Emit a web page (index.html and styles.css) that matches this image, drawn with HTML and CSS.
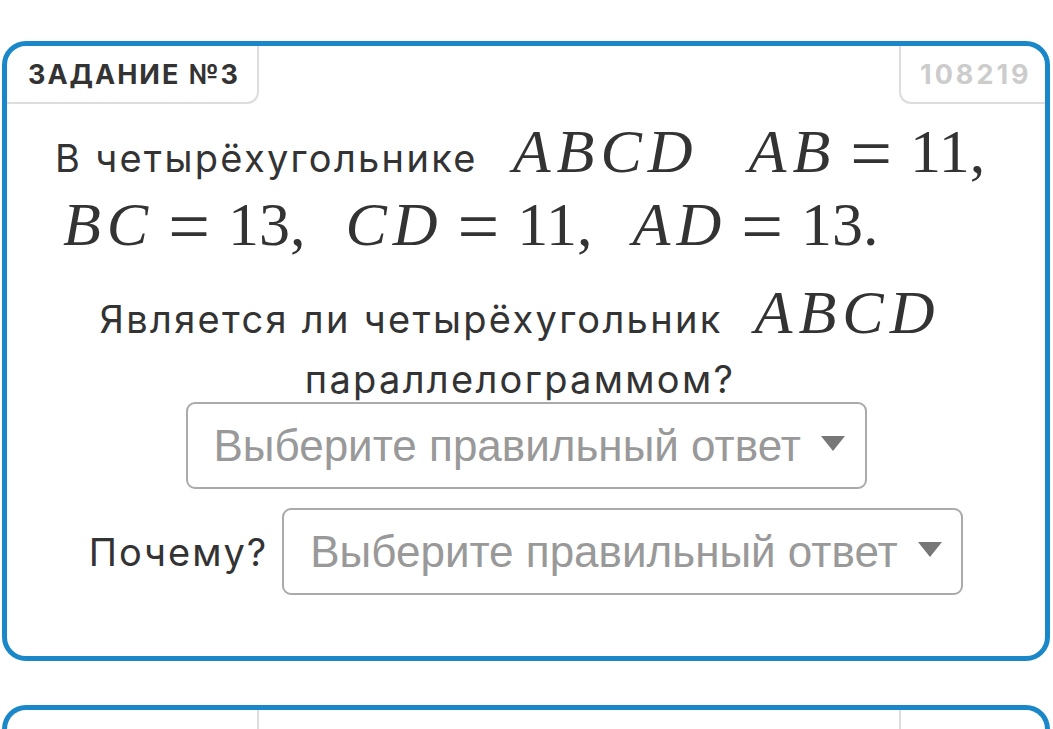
FILE: index.html
```html
<!DOCTYPE html>
<html lang="ru">
<head>
<meta charset="utf-8">
<link rel="stylesheet" href="styles.css">
</head>
<body>
<div class="card">
  <div class="card-head">
    <div class="tab tab-left">ЗАДАНИЕ №3</div>
    <div class="tab tab-right">108219</div>
  </div>
  <div class="card-body">
    <p class="statement">В четырёхугольнике <span class="m m-first"><i>ABCD</i></span><span class="m m-gap"><i>AB</i><span class="eq">=</span>11,</span><br><span class="m m-line"><i>BC</i><span class="eq">=</span>13,</span><span class="m m-sp"><i>CD</i><span class="eq">=</span>11,</span><span class="m m-sp"><i>AD</i><span class="eq">=</span>13.</span></p>
    <p class="question">Является ли четырёхугольник <span class="m m-q"><i>ABCD</i></span><br>параллелограммом?</p>
    <div class="sel-row sel-row-1">
      <div class="select">Выберите правильный ответ<span class="caret"></span></div>
    </div>
    <div class="sel-row sel-row-2">
      <span class="label">Почему?</span>
      <div class="select">Выберите правильный ответ<span class="caret"></span></div>
    </div>
  </div>
</div>
<div class="card card-2">
  <div class="card-head">
    <div class="tab tab-left">&nbsp;</div>
    <div class="tab tab-right">&nbsp;</div>
  </div>
</div>
</body>
</html>
```
FILE: styles.css
```css
html, body {
  margin: 0;
  padding: 0;
  background: #ffffff;
}
body {
  padding-top: 41px;
  padding-left: 2px;
  font-family: Inter, "Liberation Sans", Arial, sans-serif;
  color: #333333;
  overflow: hidden;
  height: 729px;
  box-sizing: border-box;
}
.card {
  width: 1048px;
  height: 620px;
  box-sizing: border-box;
  border: 5px solid #1a87c9;
  border-radius: 24px;
  overflow: hidden;
}
.card-2 {
  margin-top: 44px;
  height: 24px;
  border-bottom: 0;
  border-radius: 24px 24px 0 0;
}
.card-head {
  display: flex;
  justify-content: space-between;
  height: 58px;
}
.tab {
  box-sizing: border-box;
  height: 58px;
  border-bottom: 2px solid #dddddd;
  font-weight: bold;
  font-size: 27px;
  line-height: 58px;
}
.tab-left {
  width: 252px;
  border-right: 2px solid #dddddd;
  border-bottom-right-radius: 12px;
  padding-left: 21px;
  color: #333333;
  letter-spacing: 2px;
}
.tab-right {
  width: 146px;
  border-left: 2px solid #dddddd;
  border-bottom-left-radius: 12px;
  padding-left: 19px;
  color: #cccccc;
  letter-spacing: 3px;
}
.statement {
  margin: 18px 0 0 0;
  padding-left: 48px;
  font-size: 38px;
  line-height: 73px;
  letter-spacing: 2.3px;
}
.question {
  margin: 21px 0 0 0;
  text-align: center;
  font-size: 38px;
  line-height: 60px;
  padding-right: 12px;
  letter-spacing: 2.3px;
}
.m {
  font-family: "Liberation Serif", "Times New Roman", serif;
  font-size: 62px;
  line-height: 0;
  letter-spacing: 0;
  white-space: nowrap;
}
.m i {
  letter-spacing: 6px;
}
.eq {
  font-size: 74px;
  margin: 0 18px 0 14px;
  vertical-align: -6px;
}
.m-first {
  margin-left: 22px;
}
.m-gap {
  margin-left: 50px;
}
.m-sp {
  margin-left: 40px;
}
.m-line {
  margin-left: 8px;
}
.m-q {
  margin-left: 19px;
}
.sel-row {
  display: flex;
  justify-content: center;
  align-items: center;
  gap: 14px;
}
.sel-row-1 {
  margin-top: -7px;
}
.sel-row-2 {
  margin-top: 19px;
}
.label {
  font-size: 38px;
  letter-spacing: 2px;
}
.select {
  box-sizing: border-box;
  width: 681px;
  height: 87px;
  border: 2px solid #aaaaaa;
  border-radius: 9px;
  display: flex;
  align-items: center;
  padding-left: 26px;
  font-family: "Liberation Sans", Arial, sans-serif;
  font-size: 44px;
  color: #999999;
  letter-spacing: 0;
}
.caret {
  width: 0;
  height: 0;
  border-left: 12px solid transparent;
  border-right: 12px solid transparent;
  border-top: 15px solid #777777;
  margin-left: 20px;
  margin-top: -4px;
}
```
